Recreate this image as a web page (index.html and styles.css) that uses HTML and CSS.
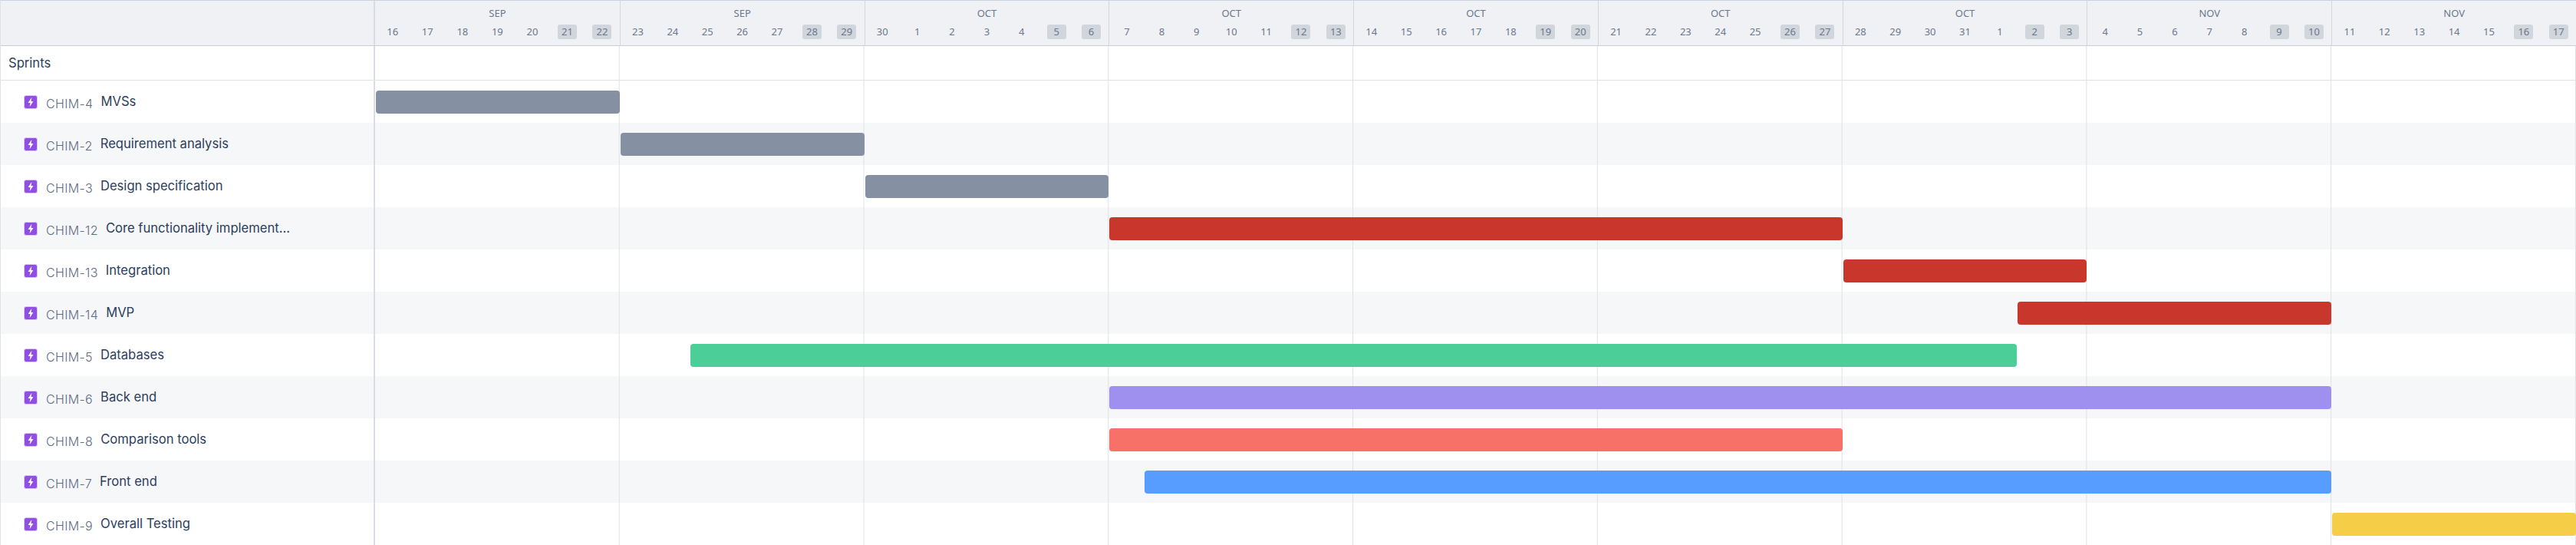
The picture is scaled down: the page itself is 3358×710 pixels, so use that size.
FILE: index.html
```html
<!DOCTYPE html>
<html lang="en">
<head>
<meta charset="utf-8">
<title>Roadmap</title>
<link rel="stylesheet" href="styles.css">
</head>
<body>
<main class="gantt">
  <header class="row head">
    <div class="side"></div>
    <div class="weeks" id="weeks"></div>
  </header>
  <section class="row sprints">
    <div class="side"><span class="summary">Sprints</span></div>
    <div class="track"></div>
  </section>
  <div id="rows"></div>
</main>
<svg class="defs" width="0" height="0" aria-hidden="true"><symbol id="bolt" viewBox="0 0 16 16"><path d="M9.4 1.8 4.6 8.9h2.9l-.9 5.3 4.8-7.1H8.5z" fill="#fff"/></symbol></svg>
<script src="app.js"></script>
</body>
</html>
```

FILE: app.js
```js
const weeks = [
  ["SEP", [16,17,18,19,20,21,22]],
  ["SEP", [23,24,25,26,27,28,29]],
  ["OCT", [30,1,2,3,4,5,6]],
  ["OCT", [7,8,9,10,11,12,13]],
  ["OCT", [14,15,16,17,18,19,20]],
  ["OCT", [21,22,23,24,25,26,27]],
  ["OCT", [28,29,30,31,1,2,3]],
  ["NOV", [4,5,6,7,8,9,10]],
  ["NOV", [11,12,13,14,15,16,17]]
];
const issues = [
  ["CHIM-4","MVSs",0,7,"slate"],
  ["CHIM-2","Requirement analysis",7,14,"slate"],
  ["CHIM-3","Design specification",14,21,"slate"],
  ["CHIM-12","Core functionality implement...",21,42,"red"],
  ["CHIM-13","Integration",42,49,"red"],
  ["CHIM-14","MVP",47,56,"red"],
  ["CHIM-5","Databases",9,47,"green"],
  ["CHIM-6","Back end",21,56,"purple"],
  ["CHIM-8","Comparison tools",21,42,"coral"],
  ["CHIM-7","Front end",22,56,"blue"],
  ["CHIM-9","Overall Testing",56,63,"yellow"]
];
document.getElementById("weeks").innerHTML = weeks.map(([m, days]) =>
  `<div class="week"><div class="month">${m}</div><div class="days">${days.map((d, i) =>
    `<span class="day${i > 4 ? " weekend" : ""}">${d}</span>`).join("")}</div></div>`).join("");
document.getElementById("rows").innerHTML = issues.map(([key, name, a, b, c]) =>
  `<div class="row issue"><div class="side"><svg class="icon"><use href="#bolt"/></svg><span class="key">${key}</span><span class="summary">${name}</span></div>` +
  `<div class="track"><div class="bar ${c}" style="grid-column:${a + 1}/${b + 1}"></div></div></div>`).join("");
```

FILE: styles.css
```css
* { box-sizing: border-box; }
html, body { margin: 0; padding: 0; background: #fff; }
body { font-family: Inter, "Noto Sans", sans-serif; overflow: hidden; }
.defs { display: block; height: 0; }
.gantt { width: 3358px; height: 710px; border-top: 1px solid #ccd2db; border-left: 1px solid #dfe1e6; overflow: hidden; }
.row { display: grid; grid-template-columns: 488px 1fr; }
.side { border-right: 2px solid #d9dde4; display: flex; align-items: center; min-width: 0; }
.head { height: 59px; background: #f0f1f4; border-bottom: 1px solid #c9ced7; }
.weeks { display: grid; grid-template-columns: repeat(9, 1fr); font-family: "Noto Sans", sans-serif; }
.week { border-left: 1px solid #d3d7de; display: flex; flex-direction: column; align-items: stretch; }
.week:first-child { border-left: 0; }
.month { text-align: center; font-size: 13px; line-height: 16px; margin-top: 8px; color: #6b778c; }
.days { display: flex; justify-content: space-around; margin-top: 7px; }
.day { width: 25px; height: 19px; border-radius: 3px; font-size: 13px; line-height: 19px; text-align: center; color: #6b778c; }
.weekend { background: #d1d5dc; }
.sprints { height: 45px; border-bottom: 1px solid #dfe1e6; }
.sprints .side { padding-left: 10px; }
.issue { height: 55px; }
.issue:nth-child(even) { background: #f6f7f9; }
.issue .side { padding-left: 30px; }
.icon { width: 18px; height: 18px; background: #904ee2; border-radius: 3px; border: 1px solid #d9c6f3; flex: none; margin-right: 11px; }
.key { font-size: 16px; font-weight: 300; letter-spacing: .35px; color: #5e6c84; margin-right: 10px; margin-top: 4px; white-space: nowrap; }
.summary { font-size: 16.6px; color: #2c3e5d; white-space: nowrap; margin-top: -1px; }
.track {
  display: grid; grid-template-columns: repeat(63, 1fr); align-items: center;
  background-image: linear-gradient(to right, #dfe1e6 1px, transparent 1px);
  background-size: calc(100% / 9) 100%;
  background-position: -1px 0;
}
.bar { height: 30px; border-radius: 4px; margin-left: 1px; }
.slate { background: #8590a2; }
.red { background: #c9372c; }
.green { background: #4bce97; }
.purple { background: #9f8fef; }
.coral { background: #f87168; }
.blue { background: #579dff; }
.yellow { background: #f5cd47; }
```
